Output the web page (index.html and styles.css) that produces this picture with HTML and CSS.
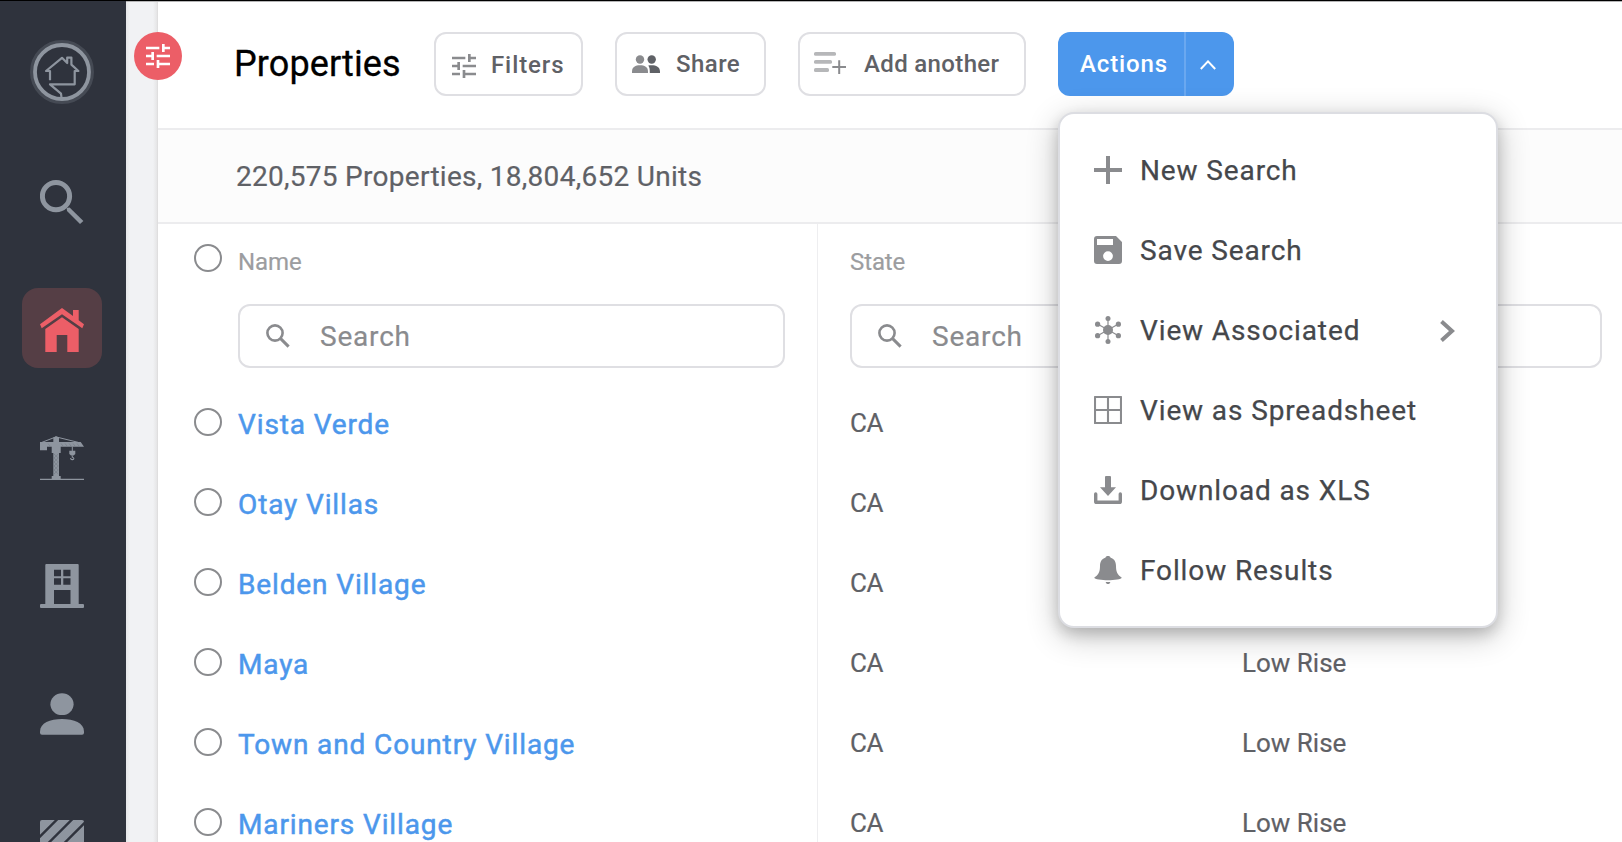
FILE: index.html
```
<!DOCTYPE html>
<html lang="en">
<head>
<meta charset="utf-8">
<title>Properties</title>
<link rel="stylesheet" href="styles.css">
</head>
<body>
<svg class="defs" aria-hidden="true">
  <symbol id="tune" viewBox="3 3 18 18"><path d="M3 17v2h6v-2H3zM3 5v2h10V5H3zm10 16v-2h8v-2h-8v-2h-2v6h2zM7 9v2H3v2h4v2h2V9H7zm14 4v-2H11v2h10zm-6-4h2V7h4V5h-4V3h-2v6z"/></symbol>
  <symbol id="magnifier" viewBox="0 0 24 24"><circle cx="9" cy="9" r="7.6" fill="none" stroke="currentColor" stroke-width="2.6"/><path d="M14.6 14.6L22.6 22.6" stroke="currentColor" stroke-width="3"/></symbol>
</svg>
<div class="app">
  <nav class="sidebar">
    <svg class="logo" viewBox="0 0 64 64" width="64" height="64" fill="none" stroke="#8e959f" stroke-width="2.2">
      <circle cx="32" cy="32" r="30" stroke="#454a54" stroke-width="4"/>
      <circle cx="32" cy="32" r="27" stroke-width="3.8"/>
      <path d="M20 40.3V31H16L32 17.8L37.2 23V17.6H41.4V24.6L48.4 31H44.7V44.3H20L31 53.6L31.7 59" stroke-linejoin="round"/>
    </svg>
    <div class="rule"></div>
    <div class="nav">
      <a class="item"><svg viewBox="0 0 44 44"><circle cx="16" cy="16.2" r="13.6" fill="none" stroke="currentColor" stroke-width="5"/><path d="M26.6 28L29.6 27.6L43.4 41L40 44L27 31Z"/></svg></a>
      <a class="item active"><svg viewBox="0 0 44 44"><path d="M22 0L33 8V2H38.7V12.3L44 16.3L42.3 20.3L22 6.3L1.7 20.3L0 16.3Z"/><path d="M22 9.3L38.7 21V44H27.3V27H16.7V44H5.3V21Z"/></svg></a>
      <a class="item"><svg viewBox="0 0 44 44"><path d="M0 6H40.7L44 10.7H20.7V17H19V40H20.7V42.7H44V44H0V42.7H11.7V40H13.3V17H11.7V10.7H7V14.3H0Z"/><path d="M13.3 6V1.5L16 .3L19 1.5V6Z"/><path d="M2 6.3L16 .9L38 6.3M32.3 10.5V15" fill="none" stroke="currentColor"/><path d="M29.3 14.7H35.3V18L33.6 19.6H31L29.3 18Z"/><path d="M32.3 19.5V21.3C34.6 21.6 34.2 23.8 32.2 23.6C31 23.5 30.6 22.8 30.7 22" fill="none" stroke="currentColor" stroke-width="1.1"/><path d="M14 18l4.3 4-4.3 4 4.3 4-4.3 4 4.3 4M18.3 18l-4.3 4 4.3 4-4.3 4 4.3 4-4.3 4M8 7.5l2 2.5M21 7.5l2 2.5M25 7.5l2 2.5M29 7.5l2 2.5M33 7.5l2 2.5M37 7.5l2 2.5" fill="none" stroke="#757c87" stroke-width=".7"/></svg></a>
      <a class="item"><svg viewBox="0 0 44 44"><path fill-rule="evenodd" d="M6.3 0H37.7Q38.7 0 38.7 1V40H43Q44 40 44 41V43Q44 44 43 44H1Q0 44 0 43V41Q0 40 1 40H5.3V1Q5.3 0 6.3 0ZM14 5.8V12.2H21V5.8ZM23.3 5.8V12.2H30.5V5.8ZM14 14.2V20.8H21V14.2ZM23.3 14.2V20.8H30.5V14.2ZM14 26V40H30.5V26Z"/></svg></a>
      <a class="item"><svg viewBox="0 0 44 44"><ellipse cx="22" cy="12.2" rx="11.6" ry="10.9"/><path d="M0 39.5C0 31 10 27 22 27S44 31 44 39.5V40.7Q44 42.7 42 42.7H2Q0 42.7 0 40.7Z"/></svg></a>
      <a class="item"><svg viewBox="0 0 44 44"><rect width="44" height="44" rx="2"/><path d="M18.5-2L-2 18.5M33.5-2L-2 33.5M49.5-2L-2 49.5" stroke="#2f333d" stroke-width="2.4"/></svg></a>
    </div>
  </nav>
  <div class="gutter">
    <button class="badge"><svg width="24" height="24"><use href="#tune"/></svg></button>
  </div>
  <main class="main">
    <header class="header">
      <h1>Properties</h1>
      <button class="btn filters"><svg width="24" height="24"><use href="#tune"/></svg><span>Filters</span></button>
      <button class="btn share"><svg viewBox="0 0 28 18" width="28" height="18"><circle cx="8" cy="4.5" r="4.2"/><path d="M0 16.5C0 12 3.5 10.3 8 10.3S16 12 16 16.5V18H0Z"/><g fill="#5f6166"><circle cx="19.7" cy="4.5" r="4.2"/><path d="M16.3 10.6C22 9.6 28 11 28 16.5V18H17.8C17.8 14.5 17.6 12.5 16.3 10.6Z"/></g></svg><span>Share</span></button>
      <button class="btn add"><svg viewBox="0 0 32 22" width="32" height="22"><g fill="#b6b7b9"><rect width="22" height="3.8" rx="1.6"/><rect y="8" width="18" height="3.8" rx="1.6"/><rect y="16" width="15" height="4" rx="1.6"/></g><path d="M18.3 15H32M25.2 8.2V22" stroke="currentColor" stroke-width="2"/></svg><span>Add another</span></button>
      <div class="split">
        <button class="actions">Actions</button>
        <button class="caret"><svg viewBox="0 0 16 10" width="16" height="10"><path d="M.8 9L8 1.4L15.2 9" fill="none" stroke="#fff" stroke-width="2"/></svg></button>
        <div class="menu">
          <a><svg viewBox="0 0 28 28"><path d="M0 14H28M14 0V28" stroke="currentColor" stroke-width="4"/></svg><span>New Search</span></a>
          <a><svg viewBox="0 0 28 28"><path fill-rule="evenodd" d="M3 0H22L28 6V25Q28 28 25 28H3Q0 28 0 25V3Q0 0 3 0ZM3 3V9H19V3ZM14 15.2A4.9 4.9 0 1 0 14 25A4.9 4.9 0 1 0 14 15.2Z"/></svg><span>Save Search</span></a>
          <a><svg viewBox="0 0 28 28"><path d="M14 2.3V25.7M3.5 8L24.5 19.8M24.5 8L3.5 19.8" stroke="currentColor" stroke-width="1.2"/><circle cx="14" cy="14" r="5"/><circle cx="14" cy="2.5" r="2.5"/><circle cx="14" cy="25.5" r="2.5"/><circle cx="3.6" cy="8.2" r="2.6"/><circle cx="24.4" cy="8.2" r="2.6"/><circle cx="3.6" cy="19.7" r="2.6"/><circle cx="24.4" cy="19.7" r="2.6"/></svg><span>View Associated</span><svg class="chev" viewBox="0 0 15 22"><path d="M1.5 1.5L12 11L1.5 20.5" fill="none" stroke="currentColor" stroke-width="4"/></svg></a>
          <a><svg viewBox="0 0 28 28"><path d="M1 1H27V27H1ZM14 1V27M1 14H27" fill="none" stroke="currentColor" stroke-width="2.1" stroke-linejoin="round"/></svg><span>View as Spreadsheet</span></a>
          <a><svg viewBox="0 0 28 28"><path d="M12 0H16Q17 0 17 1V11.3H22L14 20L6 11.3H11V1Q11 0 12 0Z"/><path d="M1.7 18V25.4Q1.7 26.3 2.6 26.3H25.4Q26.3 26.3 26.3 25.4V18" fill="none" stroke="currentColor" stroke-width="3.4" stroke-linecap="round"/></svg><span>Download as XLS</span></a>
          <a><svg viewBox="0 0 28 28"><path d="M14 0C15.5 0 16.3 .7 16.6 1.7C20.5 2.8 22 6 22 10C22 16 23.5 19 27.7 21.6C27.7 23.6 20 24.3 14 24.3S.3 23.6 .3 21.6C4.5 19 6 16 6 10C6 6 7.5 2.8 11.4 1.7C11.7 .7 12.5 0 14 0Z"/><path d="M11.7 26H16.3C16 27.4 15.2 28 14 28S12 27.4 11.7 26Z"/></svg><span>Follow Results</span></a>
        </div>
      </div>
    </header>
    <div class="stats">220,575 Properties, 18,804,652 Units</div>
    <section class="table">
      <div class="col names">
        <div class="head"><i class="radio"></i><span>Name</span></div>
        <div class="search"><svg width="24" height="24"><use href="#magnifier"/></svg><span>Search</span></div>
        <div class="row"><i class="radio"></i><a>Vista Verde</a></div>
        <div class="row"><i class="radio"></i><a>Otay Villas</a></div>
        <div class="row"><i class="radio"></i><a>Belden Village</a></div>
        <div class="row"><i class="radio"></i><a>Maya</a></div>
        <div class="row"><i class="radio"></i><a>Town and Country Village</a></div>
        <div class="row"><i class="radio"></i><a>Mariners Village</a></div>
      </div>
      <div class="col states">
        <div class="head"><span>State</span></div>
        <div class="search"><svg width="24" height="24"><use href="#magnifier"/></svg><span>Search</span></div>
        <div class="row"><span class="state">CA</span></div>
        <div class="row"><span class="state">CA</span></div>
        <div class="row"><span class="state">CA</span></div>
        <div class="row"><span class="state">CA</span><span>Low Rise</span></div>
        <div class="row"><span class="state">CA</span><span>Low Rise</span></div>
        <div class="row"><span class="state">CA</span><span>Low Rise</span></div>
      </div>
    </section>
  </main>
</div>
</body>
</html>
```
FILE: styles.css
```
* { box-sizing: border-box; }
body { margin: 0; overflow: hidden; font-family: Roboto, "Liberation Sans", sans-serif; background: #fff; color: #5f6166; }
button { font: inherit; border: 0; padding: 0; margin: 0; background: none; color: inherit; }
svg { display: block; flex: none; fill: currentColor; }
.defs { display: none; }
.app { display: flex; height: 842px; border-top: 1px solid #000; box-shadow: inset 0 1px 0 #b5b5b6; overflow: hidden; }

/* Sidebar */
.sidebar { width: 126px; flex: none; background: #2f333d; color: #8e959f; display: flex; flex-direction: column; align-items: center; padding: 39px 2px 0 0; }
.logo { fill: none; }
.rule { width: 72px; height: 2px; margin-top: 30px; background: #535761; }
.nav { display: flex; flex-direction: column; gap: 48px; padding-top: 26px; }
.item { width: 80px; height: 80px; flex: none; display: grid; place-items: center; padding-top: 4px; border-radius: 16px; }
.item svg { width: 44px; height: 44px; }
.item.active { background: #553e45; color: #ec5e67; }

/* Gutter */
.gutter { width: 32px; flex: none; position: relative; z-index: 1; margin-top: 1px; background: linear-gradient(90deg, #e6e7e9 0, #f1f2f4 4px, #f1f2f4 27px, #e5e5e6 31px, #d9d8d8 32px); }
.badge { position: absolute; left: 8px; top: 30px; width: 48px; height: 48px; border-radius: 50%; background: #ec5e67; color: #fff; display: grid; place-items: center; }

/* Header */
.main { flex: 1; min-width: 0; margin-top: 1px; background: #fff; }
.header { height: 128px; padding: 0 0 2px 76px; display: flex; align-items: center; border-bottom: 2px solid #ececee; }
h1 { margin: 0; width: 200px; font-size: 36px; line-height: 42px; font-weight: 400; letter-spacing: .1px; color: #000; -webkit-text-stroke: .3px; }
.btn, .split { height: 64px; display: flex; align-items: center; font-size: 24px; line-height: 28px; font-weight: 500; border-radius: 12px; }
.btn { border: 2px solid #dfdfe3; color: #8a8b8e; }
.btn span { color: #5f6166; }
.filters { width: 149px; margin-right: 32px; padding-left: 16px; gap: 15px; letter-spacing: .9px; padding-top: 1px; }
.filters svg { margin-top: 3px; }
.share { width: 151px; margin-right: 32px; padding-left: 15px; gap: 16px; letter-spacing: .45px; }
.add { width: 228px; margin-right: 32px; padding-left: 14px; gap: 18px; letter-spacing: .35px; }
.add svg { margin-top: -2px; }
.split { width: 176px; position: relative; background: #4c97ec; color: #fff; }
.actions { width: 128px; height: 64px; padding-left: 22px; text-align: left; letter-spacing: .85px; border-right: 2px solid #6aa8f0; }
.caret { flex: 1; display: grid; place-items: center; padding: 2px 4px 0 0; }

/* Actions menu */
.menu { position: absolute; z-index: 2; left: 0; top: 80px; width: 440px; height: 516px; padding: 16px 34px; background: #fff; border: 2px solid #dcdde2; border-radius: 16px; box-shadow: 0 8px 32px rgba(0, 0, 0, .24), 0 6px 14px rgba(0, 0, 0, .16); }
.menu a { height: 80px; display: flex; align-items: center; color: #8a8b8e; }
.menu svg { width: 28px; height: 28px; margin-right: 18px; }
.menu span { padding-top: 2px; font-size: 28px; line-height: 34px; font-weight: 400; letter-spacing: .88px; color: #45474b; -webkit-text-stroke: .25px; }
.menu .chev { width: 15px; height: 22px; margin: 2px 7px 0 auto; }

/* Results */
.stats { height: 94px; padding: 0 0 0 78px; border-bottom: 2px solid #ececee; background: #fcfcfc; font-size: 28px; line-height: 94px; letter-spacing: .28px; -webkit-text-stroke: .2px; }
.table { display: flex; }
.col { height: 618px; }
.names { width: 660px; padding: 0 32px 0 36px; border-right: 1px solid #eeeef0; }
.states { flex: 1; padding: 0 20px 0 32px; }
.radio { width: 28px; height: 28px; flex: none; border: 2px solid #8a8b8e; border-radius: 50%; margin: 0 16px 0 -6px; }
.names .head, .names .row { padding-left: 6px; }
.head { height: 80px; padding-bottom: 4px; display: flex; align-items: center; font-size: 24px; line-height: 28px; letter-spacing: -.1px; color: #9c9da0; -webkit-text-stroke: .2px; }
.head .radio { margin-top: -8px; }
.names .search { margin-left: 44px; width: 547px; }
.search { height: 64px; margin-bottom: 14px; padding-left: 26px; display: flex; align-items: center; gap: 30px; border: 2px solid #dfdfe3; border-radius: 12px; font-size: 28px; line-height: 32px; letter-spacing: .8px; color: #8a8b8e; -webkit-text-stroke: .2px; }
.search span { padding-top: 2px; }
.row { height: 80px; display: flex; align-items: center; font-size: 26px; line-height: 30px; -webkit-text-stroke: .2px; }
.row a { padding-top: 6px; font-size: 28px; font-weight: 400; letter-spacing: .87px; color: #4c97ec; -webkit-text-stroke: .5px; }
.row span { padding-top: 2px; letter-spacing: 0; }
.row .state { width: 392px; letter-spacing: -.3px; }
```
